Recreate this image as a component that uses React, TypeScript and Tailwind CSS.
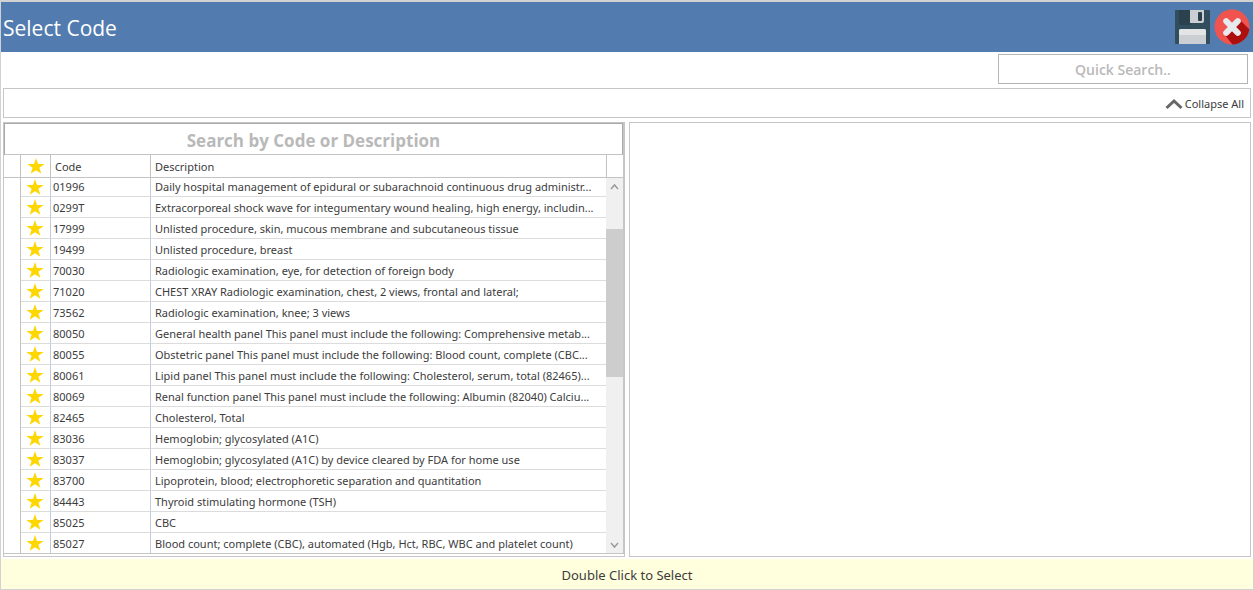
interface CodeRow {
  code: string;
  description: string;
}

const rows: CodeRow[] = [
  { code: "01996", description: "Daily hospital management of epidural or subarachnoid continuous drug administr..." },
  { code: "0299T", description: "Extracorporeal shock wave for integumentary wound healing, high energy, includin..." },
  { code: "17999", description: "Unlisted procedure, skin, mucous membrane and subcutaneous tissue" },
  { code: "19499", description: "Unlisted procedure, breast" },
  { code: "70030", description: "Radiologic examination, eye, for detection of foreign body" },
  { code: "71020", description: "CHEST XRAY Radiologic examination, chest, 2 views, frontal and lateral;" },
  { code: "73562", description: "Radiologic examination, knee; 3 views" },
  { code: "80050", description: "General health panel This panel must include the following: Comprehensive metab..." },
  { code: "80055", description: "Obstetric panel This panel must include the following: Blood count, complete (CBC..." },
  { code: "80061", description: "Lipid panel This panel must include the following: Cholesterol, serum, total (82465)..." },
  { code: "80069", description: "Renal function panel This panel must include the following: Albumin (82040) Calciu..." },
  { code: "82465", description: "Cholesterol, Total" },
  { code: "83036", description: "Hemoglobin; glycosylated (A1C)" },
  { code: "83037", description: "Hemoglobin; glycosylated (A1C) by device cleared by FDA for home use" },
  { code: "83700", description: "Lipoprotein, blood; electrophoretic separation and quantitation" },
  { code: "84443", description: "Thyroid stimulating hormone (TSH)" },
  { code: "85025", description: "CBC" },
  { code: "85027", description: "Blood count; complete (CBC), automated (Hgb, Hct, RBC, WBC and platelet count)" },
];

function Star() {
  return (
    <svg viewBox="0 0 18 16" className="mx-auto block h-4 w-[18px]" aria-hidden="true">
      <path
        d="M9 0l2 5.9 6.8.1-5.4 3.8 2 6L9 12.2l-5.4 3.6 2-6L.2 6 7 5.9z"
        fill="#ffd700"
      />
    </svg>
  );
}

function SaveIcon() {
  return (
    <svg viewBox="0 0 35 34" className="block h-[34px] w-[35px]" aria-hidden="true">
      <path d="M0 1q0-1 1-1h33q1 0 1 1v32q0 1-1 1H1q-1 0-1-1z" fill="#324d5b" />
      <path d="M4 0h12v15H6q-2 0-2-2z" fill="#2b414d" />
      <path d="M15 0h14v11q0 2-2 2H15z" fill="#cbcfd3" />
      <rect x="23" y="2" width="4" height="9" rx="1" fill="#2b414d" />
      <path d="M4 34V21q0-2 2-2h23q2 0 2 2v13z" fill="#cbcfd3" />
      <path d="M4 25v-4q0-2 2-2h23q2 0 2 2v4z" fill="#e2e4e6" />
    </svg>
  );
}

function CancelIcon() {
  return (
    <svg viewBox="0 0 36 36" className="block size-9" aria-hidden="true">
      <defs>
        <clipPath id="disc">
          <circle cx="18" cy="18" r="17.5" />
        </clipPath>
      </defs>
      <circle cx="18" cy="18" r="17.5" fill="#f1544f" />
      <path d="M10 25l16-14 14 14-10 16H23z" fill="#ad0e0e" clipPath="url(#disc)" />
      <path
        d="M12.2 12.2l11.6 11.6M23.8 12.2L12.2 23.8"
        stroke="#e6e9ee"
        strokeWidth="6"
        strokeLinecap="round"
      />
    </svg>
  );
}

function ScrollArrow({ down = false }: { down?: boolean }) {
  return (
    <svg viewBox="0 0 17 17" className="block size-[17px]" fill="none" stroke="#9a9a9a" strokeWidth="1.5" aria-hidden="true">
      <path d={down ? "M5 7l3.5 4L12 7" : "M5 11l3.5-4 3.5 4"} />
    </svg>
  );
}

function CodeTable() {
  return (
    <table className="flex-1 table-fixed border-separate border-spacing-0 text-left">
      <colgroup>
        <col className="w-[17px]" />
        <col className="w-[30px]" />
        <col className="w-[100px]" />
        <col />
      </colgroup>
      <thead>
        <tr className="h-[23px]">
          <td className="border-r border-b border-[#c3c3c3]" />
          <th className="border-r border-b border-[#c3c3c3] p-0" aria-label="Favorite">
            <Star />
          </th>
          <th className="border-r border-b border-[#c3c3c3] px-1 pt-0.5 pb-0 font-normal">Code</th>
          <th className="border-b border-[#c3c3c3] px-1 pt-0.5 pb-0 font-normal">Description</th>
        </tr>
      </thead>
      <tbody>
        {rows.map((row) => (
          <tr key={row.code} className="h-[21px] first:h-[19px] first:*:pt-0 last:h-5 last:*:border-b-0">
            <td className="border-r border-[#c3c3c3] p-0" />
            <td className="border-r border-b border-r-[#c0cbdc] border-b-[#dcdcdc] p-0 pr-0.5">
              <Star />
            </td>
            <td className="border-r border-b border-r-[#c0cbdc] border-b-[#dcdcdc] px-0.5 pt-0.5 pb-0">{row.code}</td>
            <td className="overflow-hidden border-b border-[#dcdcdc] px-1 pt-0.5 pb-0 whitespace-nowrap">
              {row.description}
            </td>
          </tr>
        ))}
      </tbody>
    </table>
  );
}

function ScrollTrack() {
  return (
    <div className="flex w-[17px] shrink-0 flex-col">
      <div className="h-[23px] shrink-0 border-b border-l border-[#c3c3c3]" />
      <div className="flex flex-1 flex-col bg-[#f0f0f0]">
        <button type="button" aria-label="Scroll up">
          <ScrollArrow />
        </button>
        <div className="flex-[34]" />
        <div className="flex-[148] bg-[#cdcdcd]" />
        <div className="flex-[159]" />
        <button type="button" aria-label="Scroll down">
          <ScrollArrow down />
        </button>
      </div>
    </div>
  );
}

export default function App() {
  return (
    <div className="flex min-h-screen flex-col border border-t-2 border-[#d2d2d2] bg-white font-['Noto_Sans',sans-serif] text-[11px] leading-4 text-[#3c3c3c]">
      <header className="flex h-[50px] items-center justify-between bg-[#527cb0] pr-[3px] pl-0.5 font-['Open_Sans',sans-serif]">
        <h1 className="pt-0.5 text-[21px] leading-7 text-white">Select Code</h1>
        <div className="flex items-center gap-1">
          <button type="button" aria-label="Save">
            <SaveIcon />
          </button>
          <button type="button" aria-label="Close">
            <CancelIcon />
          </button>
        </div>
      </header>

      <div className="flex justify-end pt-0.5 pr-[5px]">
        <input
          type="text"
          aria-label="Quick search"
          placeholder="Quick Search.."
          className="h-[30px] w-[250px] border border-[#b4b4b4] text-center font-['Open_Sans',sans-serif] text-[14px] font-semibold outline-none placeholder:text-[#b9b9b9]"
        />
      </div>

      <div className="mx-0.5 mt-1 flex h-[30px] items-center justify-end border border-[#c6c6c6] pr-1.5">
        <button type="button" className="flex items-center gap-0.5 pt-0.5">
          <svg viewBox="0 0 18 12" className="h-3 w-[18px]" fill="none" stroke="#666" strokeWidth="3" aria-hidden="true">
            <path d="M1.5 10L9 3l7.5 7" />
          </svg>
          Collapse All
        </button>
      </div>

      <main className="mx-0.5 mt-1 mb-0.5 flex flex-1 gap-1">
        <section className="flex flex-1 flex-col border border-[#c6c6c6] pb-0.5">
          <div className="flex flex-1 flex-col border-r border-b border-[#c6c6c6]">
            <input
              type="text"
              aria-label="Search by code or description"
              placeholder="Search by Code or Description"
              className="h-8 border border-[#a9a9a9] border-b-[#c3c3c3] pt-0.5 text-center font-['Open_Sans',sans-serif] text-[17px] font-bold outline-none placeholder:text-[#b9b9b9]"
            />
            <div className="flex flex-1">
              <CodeTable />
              <ScrollTrack />
            </div>
          </div>
        </section>
        <section className="flex-1 border border-[#c6c6c6]" />
      </main>

      <footer className="flex h-[30px] items-center justify-center bg-[#ffffde] pt-0.5 text-[13px]">
        Double Click to Select
      </footer>
    </div>
  );
}
